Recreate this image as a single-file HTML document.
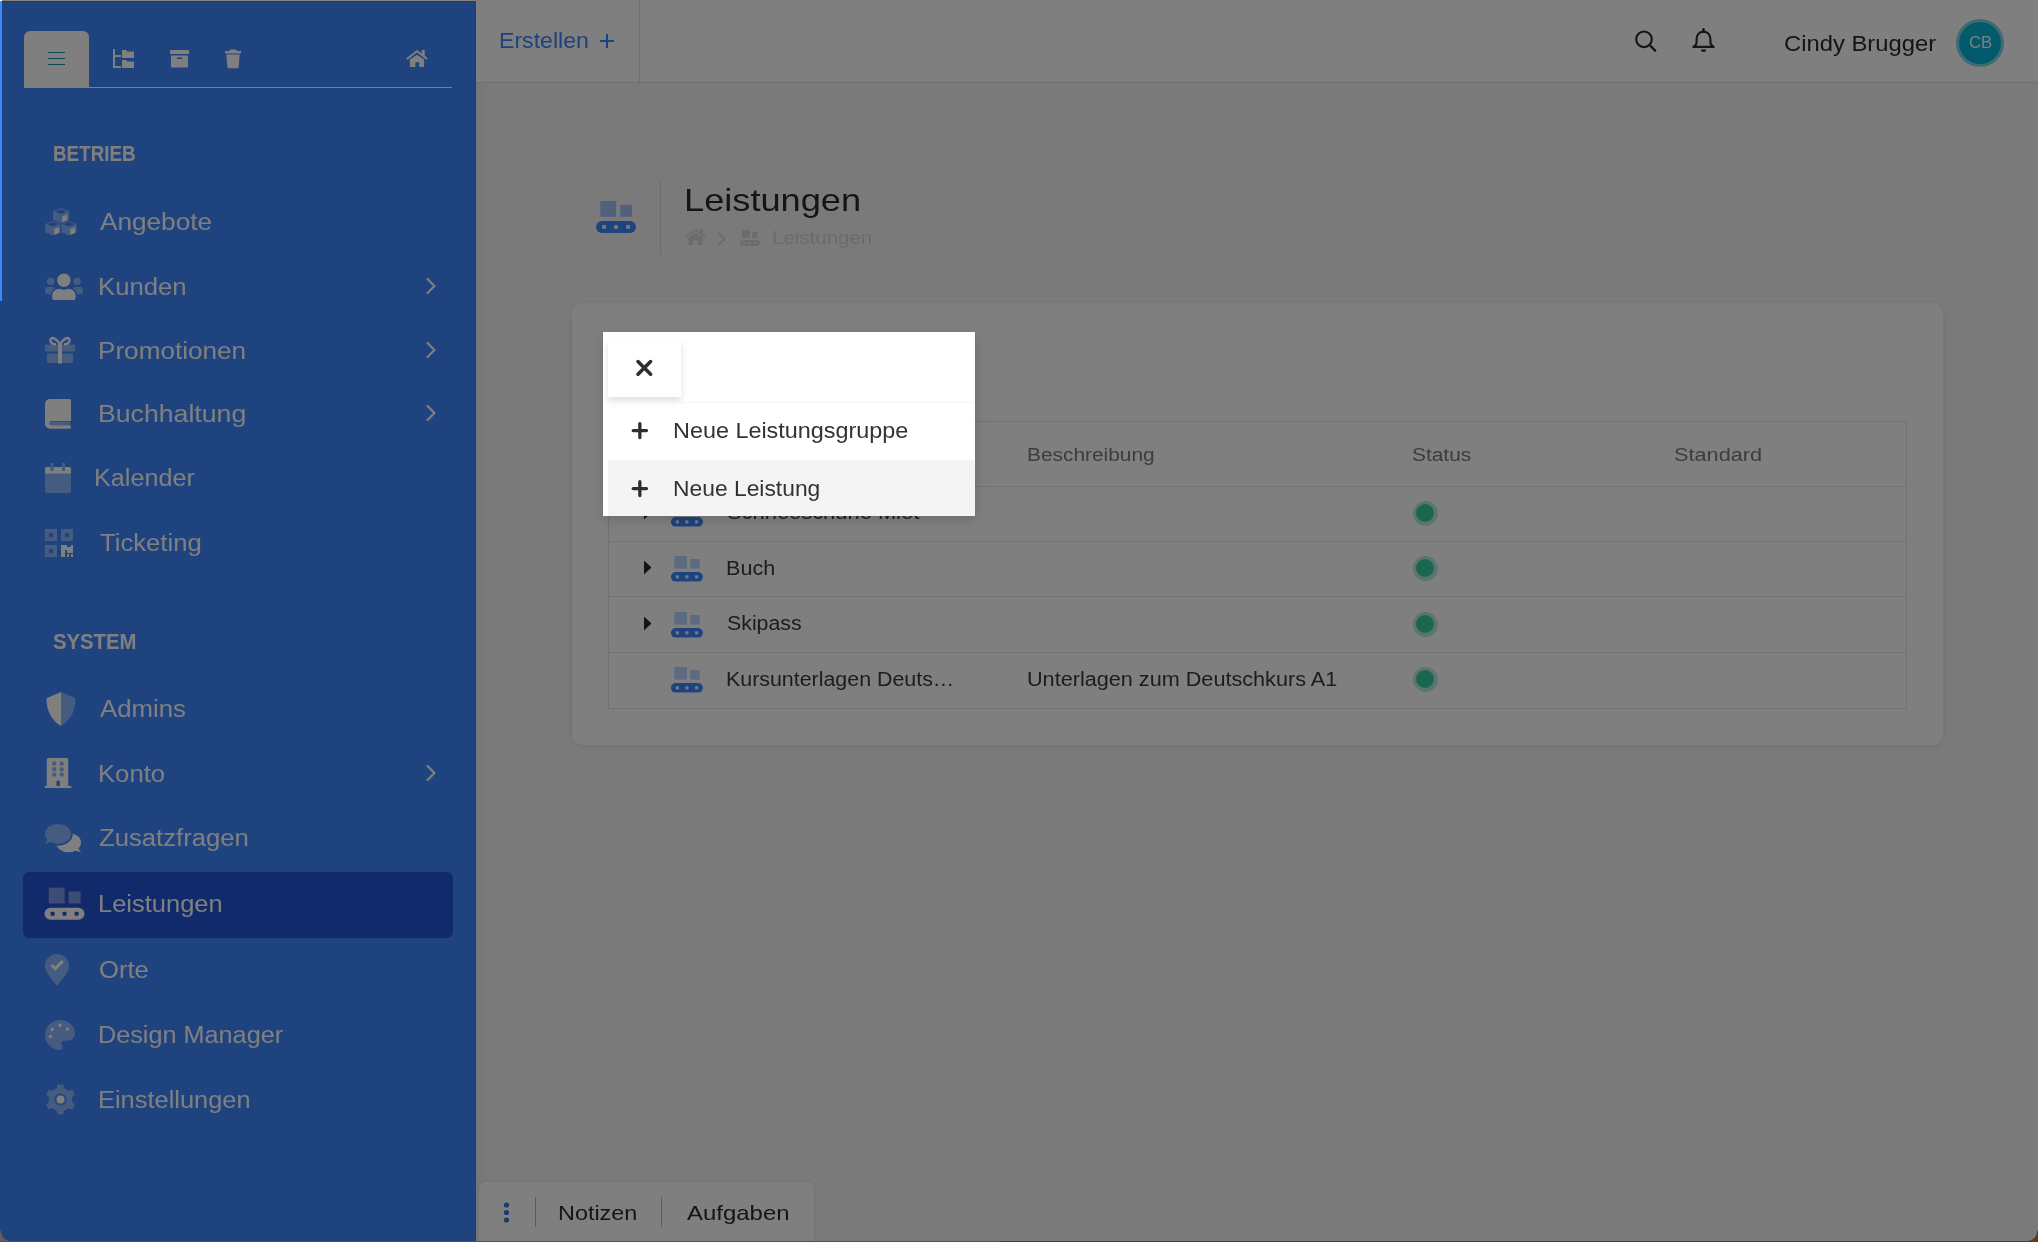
<!DOCTYPE html>
<html><head><meta charset="utf-8"><title>Leistungen</title>
<style>
html,body{margin:0;padding:0}
body{width:2038px;height:1242px;overflow:hidden;position:relative;background:#f5f5f5;font-family:"Liberation Sans",sans-serif}
.t{position:absolute;white-space:nowrap}
.box{position:absolute}
.i{position:absolute;overflow:visible}
#sb{position:absolute;left:0;top:0;width:476px;height:1242px;background:#3e86fe;box-shadow:0 0 18px rgba(0,0,0,.06);z-index:0}
</style></head><body>
<div id="sb"></div>
<div class="box" style="left:24px;top:31px;width:65px;height:56px;background:#fff;border-radius:6px 6px 0 0"></div>
<div class="box" style="left:24px;top:87px;width:428px;height:1px;background:#fff"></div>
<div class="box" style="left:48px;top:51.5px;width:17px;height:1.6px;background:#1a8fa0"></div>
<div class="box" style="left:48px;top:57.5px;width:17px;height:1.6px;background:#1a8fa0"></div>
<div class="box" style="left:48px;top:63.5px;width:17px;height:1.6px;background:#1a8fa0"></div>
<svg class="i" style="left:112px;top:48px" width="24" height="22" viewBox="0 0 24 22"><g fill="#fff"><rect x="1" y="1" width="2" height="19"/><rect x="1" y="7" width="8" height="2"/><rect x="1" y="18" width="8" height="2"/><path d="M10 2h4l1.5 1.5H22v6.5H10z"/><path d="M10 12h4l1.5 1.5H22v6.5H10z"/></g></svg>
<svg class="i" style="left:169px;top:49px" width="22" height="20" viewBox="0 0 22 20"><g fill="#fff"><rect x="1" y="1" width="19" height="4" rx="0.5"/><path d="M2 6.5h17v11a1 1 0 0 1-1 1H3a1 1 0 0 1-1-1z"/></g><rect x="8" y="8.5" width="5" height="1.5" fill="#3e86fe"/></svg>
<svg class="i" style="left:224px;top:48px" width="18" height="21" viewBox="0 0 18 21"><g fill="#fff"><path d="M6 1.5h6l0.8 1.5H17v2.6H1V3h4.2z"/><path d="M2.3 6.5h13.4l-1 12.5a1.5 1.5 0 0 1-1.5 1.3H4.8a1.5 1.5 0 0 1-1.5-1.3z"/></g></svg>
<svg class="i" style="left:405px;top:48px" width="25" height="21" viewBox="0 0 25 21"><g fill="#fff"><path d="M1.2 10.2L12 2l10.8 8.2-1.3 1.5L12 4.5 2.5 11.7z"/><rect x="16.7" y="2" width="3" height="6"/><path d="M4.9 11.5L12 6.7l7.1 4.8V19H14.2v-4.8h-3.8V19H4.9z"/></g></svg>
<div class="t" style="left:53.2px;top:143.4px;font-size:21.6px;line-height:21.6px;transform:scaleX(0.8720);transform-origin:0 0;color:#fff;font-weight:bold;">BETRIEB</div>
<div class="t" style="left:52.7px;top:630.8px;font-size:21.6px;line-height:21.6px;transform:scaleX(0.9402);transform-origin:0 0;color:#fff;font-weight:bold;">SYSTEM</div>
<div class="box" style="left:23px;top:872px;width:430px;height:66px;background:#2254d8;border-radius:6px"></div>
<div class="t" style="left:99.8px;top:210.9px;font-size:23.3px;line-height:23.3px;transform:scaleX(1.1232);transform-origin:0 0;color:#fff;font-weight:normal;">Angebote</div>
<div class="t" style="left:98.2px;top:276.0px;font-size:23.3px;line-height:23.3px;transform:scaleX(1.1039);transform-origin:0 0;color:#fff;font-weight:normal;">Kunden</div>
<div class="t" style="left:98.2px;top:340.0px;font-size:23.3px;line-height:23.3px;transform:scaleX(1.1209);transform-origin:0 0;color:#fff;font-weight:normal;">Promotionen</div>
<div class="t" style="left:98.1px;top:403.0px;font-size:23.3px;line-height:23.3px;transform:scaleX(1.1444);transform-origin:0 0;color:#fff;font-weight:normal;">Buchhaltung</div>
<div class="t" style="left:94.3px;top:466.6px;font-size:23.3px;line-height:23.3px;transform:scaleX(1.0824);transform-origin:0 0;color:#fff;font-weight:normal;">Kalender</div>
<div class="t" style="left:100.4px;top:532.0px;font-size:23.3px;line-height:23.3px;transform:scaleX(1.1011);transform-origin:0 0;color:#fff;font-weight:normal;">Ticketing</div>
<div class="t" style="left:100.0px;top:698.0px;font-size:23.3px;line-height:23.3px;transform:scaleX(1.1052);transform-origin:0 0;color:#fff;font-weight:normal;">Admins</div>
<div class="t" style="left:98.2px;top:763.2px;font-size:23.3px;line-height:23.3px;transform:scaleX(1.1017);transform-origin:0 0;color:#fff;font-weight:normal;">Konto</div>
<div class="t" style="left:98.9px;top:827.2px;font-size:23.3px;line-height:23.3px;transform:scaleX(1.1022);transform-origin:0 0;color:#fff;font-weight:normal;">Zusatzfragen</div>
<div class="t" style="left:98.2px;top:893.2px;font-size:23.3px;line-height:23.3px;transform:scaleX(1.0937);transform-origin:0 0;color:#fff;font-weight:normal;">Leistungen</div>
<div class="t" style="left:98.9px;top:958.6px;font-size:23.3px;line-height:23.3px;transform:scaleX(1.1000);transform-origin:0 0;color:#fff;font-weight:normal;">Orte</div>
<div class="t" style="left:97.8px;top:1024.0px;font-size:23.3px;line-height:23.3px;transform:scaleX(1.0828);transform-origin:0 0;color:#fff;font-weight:normal;">Design Manager</div>
<div class="t" style="left:98.2px;top:1089.0px;font-size:23.3px;line-height:23.3px;transform:scaleX(1.0912);transform-origin:0 0;color:#fff;font-weight:normal;">Einstellungen</div>
<svg class="i" style="left:425px;top:277px" width="12" height="18" viewBox="0 0 12 18"><path d="M2.5 2l7 7-7 7" fill="none" stroke="#fff" stroke-width="2.2" stroke-linecap="round" stroke-linejoin="round"/></svg>
<svg class="i" style="left:425px;top:341px" width="12" height="18" viewBox="0 0 12 18"><path d="M2.5 2l7 7-7 7" fill="none" stroke="#fff" stroke-width="2.2" stroke-linecap="round" stroke-linejoin="round"/></svg>
<svg class="i" style="left:425px;top:404px" width="12" height="18" viewBox="0 0 12 18"><path d="M2.5 2l7 7-7 7" fill="none" stroke="#fff" stroke-width="2.2" stroke-linecap="round" stroke-linejoin="round"/></svg>
<svg class="i" style="left:425px;top:764px" width="12" height="18" viewBox="0 0 12 18"><path d="M2.5 2l7 7-7 7" fill="none" stroke="#fff" stroke-width="2.2" stroke-linecap="round" stroke-linejoin="round"/></svg>
<svg class="i" style="left:44px;top:207px" width="34" height="31" viewBox="44 207 34 31"><g opacity=".4"><path fill="#fff" d="M61 208L69 211.2V220.2L61 223.4L53 220.2V211.2Z"/><path fill="#fff" stroke="#3e86fe" stroke-width="0.9" d="M53 220.5L61 223.7V232.7L53 235.9L45 232.7V223.7Z"/><path fill="#fff" stroke="#3e86fe" stroke-width="0.9" d="M69 220.5L77 223.7V232.7L69 235.9L61 232.7V223.7Z"/><path fill="#3e86fe" d="M61 209.4L67.2 211.7L61 214L54.8 211.7Z"/><path fill="#3e86fe" d="M53 221.9L59.2 224.2L53 226.5L46.8 224.2Z"/><path fill="#3e86fe" d="M69 221.9L75.2 224.2L69 226.5L62.8 224.2Z"/></g><g fill="#fff"><path d="M62.2 216.4L67.2 214.6V220.4L62.2 222.2Z"/><path d="M54.2 228.9L59.2 227.1V232.9L54.2 234.7Z"/><path d="M70.2 228.9L75.2 227.1V232.9L70.2 234.7Z"/></g></svg>
<svg class="i" style="left:44px;top:273px" width="40" height="29" viewBox="0 0 40 29"><defs><mask id="usm"><rect width="40" height="29" fill="#fff"/><path d="M8.2 22.3a6.2 6.2 0 0 1 6.2-6.2h1.8c1.3 0 2.4 .9 3.7 .9s2.4-.9 3.7-.9h1.8a6.2 6.2 0 0 1 6.2 6.2v2.6a2.2 2.2 0 0 1-2.2 2.2H10.4a2.2 2.2 0 0 1-2.2-2.2z" fill="#000" stroke="#000" stroke-width="3.2"/></mask></defs><g fill="#fff" opacity=".4"><circle cx="6.6" cy="8.5" r="3.75"/><circle cx="33.2" cy="8.5" r="3.75"/><g mask="url(#usm)"><rect x="1" y="14" width="10.5" height="7.3" rx="3"/><rect x="28.4" y="14" width="10.5" height="7.3" rx="3"/></g></g><g fill="#fff"><circle cx="19.9" cy="7.3" r="6.7"/><path d="M8.2 22.3a6.2 6.2 0 0 1 6.2-6.2h1.8c1.3 0 2.4 .9 3.7 .9s2.4-.9 3.7-.9h1.8a6.2 6.2 0 0 1 6.2 6.2v2.6a2.2 2.2 0 0 1-2.2 2.2H10.4a2.2 2.2 0 0 1-2.2-2.2z"/></g></svg>
<svg class="i" style="left:44px;top:336px" width="32" height="28" viewBox="0 0 32 28"><g fill="#fff" fill-opacity="0.4"><rect x="1" y="8.5" width="30" height="7" rx="1"/><path d="M3 17.5h26v8a1.5 1.5 0 0 1-1.5 1.5h-23A1.5 1.5 0 0 1 3 25.5z"/></g><g fill="#fff"><rect x="14" y="8" width="4" height="19.5"/><path d="M16 8.5C13 3 8 0 6.5 3.5 5.5 6 8 8 12 8.5M16 8.5C19 3 24 0 25.5 3.5 26.5 6 24 8 20 8.5" fill="none" stroke="#fff" stroke-width="2.4"/></g></svg>
<svg class="i" style="left:44px;top:398px" width="28" height="32" viewBox="0 0 28 32"><path fill="#fff" d="M6 1H25.5A1.5 1.5 0 0 1 27 2.5V23.1H7.3A2.05 2.05 0 0 0 7.3 27.2H25.3A1.8 1.8 0 0 1 25.3 30.8H6A5 5 0 0 1 1 25.8V6A5 5 0 0 1 6 1Z"/><path fill="#fff" fill-opacity="0.4" d="M7.3 23.4H26.2V26.9H7.3A1.75 1.75 0 0 1 7.3 23.4Z"/></svg>
<svg class="i" style="left:44px;top:462px" width="28" height="32" viewBox="0 0 28 32"><g fill="#fff" fill-opacity="0.4"><path d="M1 11h26v18a2 2 0 0 1-2 2H3a2 2 0 0 1-2-2z"/><rect x="6.5" y="1" width="3" height="8"/><rect x="18" y="1" width="3" height="8"/></g><g fill="#fff"><path d="M3 5h3.5v4h3V5H18v4h3V5h4a2 2 0 0 1 2 2v4.5H1V7a2 2 0 0 1 2-2z"/></g></svg>
<svg class="i" style="left:44px;top:528px" width="30" height="30" viewBox="0 0 30 30"><g fill="#fff" fill-opacity="0.4"><path fill-rule="evenodd" d="M1 1h12v12H1zM5 5v4h4V5z"/><path fill-rule="evenodd" d="M17 1h12v12H17zM21 5v4h4V5z"/><path fill-rule="evenodd" d="M1 17h12v12H1zM5 21v4h4V21z"/></g><g fill="#fff"><path d="M17 17h6v2h4v-2h2v8h-6v-3h-2v7h-4z"/><rect x="23" y="26" width="2" height="3"/><rect x="27" y="26" width="2" height="3"/></g></svg>
<svg class="i" style="left:45px;top:691px" width="32" height="36" viewBox="0 0 32 36"><path fill="#fff" d="M16 1L3 6.5C2.2 6.9 1.5 7.7 1.5 8.7 1.6 17 5 29 16 35z"/><path fill="#fff" fill-opacity="0.4" d="M16 1l13 5.5c.8.4 1.5 1.2 1.5 2.2-.1 8.3-3.5 20.3-14.5 26.3z"/></svg>
<svg class="i" style="left:44px;top:757px" width="28" height="32" viewBox="0 0 28 32"><g fill="#fff"><path d="M4.2 1h18.5a1.5 1.5 0 0 1 1.5 1.5V29h3.1v2H0.8v-2h1.9V2.5A1.5 1.5 0 0 1 4.2 1z"/></g><g fill="#3e86fe" fill-opacity=".6"><rect x="8.2" y="4.5" width="4" height="4" rx="1.2"/><rect x="15.7" y="4.5" width="4" height="4" rx="1.2"/><rect x="8.2" y="10.3" width="4" height="4" rx="1.2"/><rect x="15.7" y="10.3" width="4" height="4" rx="1.2"/><rect x="8.2" y="15.6" width="4" height="4" rx="1.2"/><rect x="15.7" y="15.6" width="4" height="4" rx="1.2"/></g><rect x="12.4" y="23.8" width="3.5" height="5.2" fill="#3e86fe"/></svg>
<svg class="i" style="left:44px;top:823px" width="40" height="32" viewBox="0 0 40 32"><defs><mask id="chm"><rect width="40" height="32" fill="#fff"/><ellipse cx="14" cy="10.9" rx="14.8" ry="11.8" fill="#000"/></mask></defs><g fill="#fff" opacity=".4"><ellipse cx="14" cy="10.9" rx="13" ry="10"/><path d="M4 15.5L1 20.7l8-2.2z"/></g><g fill="#fff" mask="url(#chm)"><ellipse cx="24.5" cy="19.6" rx="12.5" ry="9.6"/><path d="M33.5 24.5L37 29l-8.5-1.8z"/></g></svg>
<svg class="i" style="left:44px;top:887px" width="42" height="35" viewBox="0 0 42 35"><g transform="translate(0.5 0.6) scale(1.0)"><rect x="4.25" y="0" width="15.9" height="15.9" fill="#fff" fill-opacity="0.4"/><rect x="24.1" y="3.9" width="12" height="12" fill="#fff" fill-opacity="0.4"/><rect x="0" y="20.1" width="40" height="12" rx="6" fill="#fff"/><g fill="#2254d8" fill-opacity="1"><rect x="6.1" y="24.1" width="4" height="4" rx="1"/><rect x="18" y="24.1" width="4" height="4" rx="1"/><rect x="30.1" y="24.1" width="4" height="4" rx="1"/></g></g></svg>
<svg class="i" style="left:44px;top:953px" width="26" height="34" viewBox="0 0 26 34"><path fill="#fff" fill-opacity="0.4" d="M13 1C6.4 1 1 6.3 1 12.6c0 7.1 7 13.8 12 20.4 5-6.6 12-13.3 12-20.4C25 6.3 19.6 1 13 1z"/><path d="M7.5 12l3.8 3.6L18.8 8" fill="none" stroke="#fff" stroke-width="3"/></svg>
<svg class="i" style="left:44px;top:1019px" width="32" height="32" viewBox="0 0 32 32"><path fill="#fff" fill-opacity="0.4" d="M16 1C7.7 1 1 7.7 1 16s6.7 15 15 15c1.6 0 2.7-1.2 2.7-2.7 0-.8-.3-1.4-.7-2-.4-.5-.6-1.1-.6-1.8 0-1.5 1.2-2.7 2.7-2.7h3.2C27.4 21.8 31 18.7 31 14 31 6.7 24.3 1 16 1z"/><g fill="#fff"><circle cx="8.3" cy="10.3" r="1.7"/><circle cx="16.1" cy="6.2" r="1.7"/><circle cx="23.4" cy="10.1" r="1.7"/><circle cx="6.5" cy="17.5" r="1.7"/></g></svg>
<svg class="i" style="left:45px;top:1084px" width="32" height="32" viewBox="0 0 32 32"><path fill="#fff" fill-opacity="0.4" d="M11.80 4.30L12.70 0.46L18.30 0.46L19.20 4.30A11.8 11.8 0 0 1 23.35 6.69L23.35 6.69L27.13 5.55L29.93 10.40L27.05 13.10A11.8 11.8 0 0 1 27.05 17.90L27.05 17.90L29.93 20.60L27.13 25.45L23.35 24.31A11.8 11.8 0 0 1 19.20 26.70L19.20 26.70L18.30 30.54L12.70 30.54L11.80 26.70A11.8 11.8 0 0 1 7.65 24.31L7.65 24.31L3.87 25.45L1.07 20.60L3.95 17.90A11.8 11.8 0 0 1 3.95 13.10L3.95 13.10L1.07 10.40L3.87 5.55L7.65 6.69A11.8 11.8 0 0 1 11.80 4.30Z"/><circle cx="15.5" cy="15.5" r="6.2" fill="#3e86fe" fill-opacity=".75"/><circle fill="#fff" cx="15.5" cy="15.5" r="4"/></svg>
<div class="box" style="left:476px;top:0;width:1562px;height:82px;background:#fff;border-bottom:1px solid #dedede"></div>
<div class="box" style="left:639px;top:0;width:1px;height:82px;background:#dcdcdc"></div>
<div class="t" style="left:498.8px;top:30.5px;font-size:21.4px;line-height:21.4px;transform:scaleX(1.0800);transform-origin:0 0;color:#3a86fc;font-weight:normal;">Erstellen</div>
<div class="box" style="left:600px;top:40.2px;width:14.3px;height:1.7px;background:#3a86fc"></div>
<div class="box" style="left:606.3px;top:33.5px;width:1.7px;height:14.5px;background:#3a86fc"></div>
<svg class="i" style="left:1632px;top:28px" width="28" height="28" viewBox="0 0 28 28"><circle cx="12" cy="11.3" r="7.8" fill="none" stroke="#2a2a2a" stroke-width="2.1"/><path d="M17.6 17l5.6 5.6" stroke="#2a2a2a" stroke-width="2.3" stroke-linecap="round"/></svg>
<svg class="i" style="left:1691px;top:26px" width="26" height="28" viewBox="0 0 26 28"><path d="M12.5 3.2v2.2" stroke="#2a2a2a" stroke-width="2.4" stroke-linecap="round"/><path d="M12.5 5.6c-4.5 0-6.9 3.4-6.9 7.8v3.1c0 2-1.5 3.3-3.3 4.4h20.4c-1.8-1.1-3.3-2.4-3.3-4.4v-3.1c0-4.4-2.4-7.8-6.9-7.8z" fill="none" stroke="#2a2a2a" stroke-width="2.1" stroke-linejoin="round"/><path d="M10 23.6h5a2.5 2.5 0 0 1-5 0z" fill="#2a2a2a"/></svg>
<div class="t" style="left:1783.9px;top:33.0px;font-size:21.8px;line-height:21.8px;transform:scaleX(1.0920);transform-origin:0 0;color:#2b2b2b;font-weight:normal;">Cindy Brugger</div>
<div class="box" style="left:1956px;top:19px;width:48px;height:48px;border-radius:50%;background:#7cd8ea"></div>
<div class="box" style="left:1959px;top:22px;width:42px;height:42px;border-radius:50%;background:#04b4d8"></div>
<div class="t" style="left:1968.7px;top:34.6px;font-size:15.8px;line-height:15.8px;transform:scaleX(1.0600);transform-origin:0 0;color:#fff;font-weight:normal;">CB</div>
<svg class="i" style="left:595px;top:200px" width="42" height="35" viewBox="0 0 42 35"><g transform="translate(1 1) scale(1.0)"><rect x="4.25" y="0" width="15.9" height="15.9" fill="#3e86fe" fill-opacity=".45"/><rect x="24.1" y="3.9" width="12" height="12" fill="#3e86fe" fill-opacity=".45"/><rect x="0" y="20.1" width="40" height="12" rx="6" fill="#3e86fe"/><g fill="#fff" fill-opacity=".85"><rect x="6.1" y="24.1" width="4" height="4" rx="1"/><rect x="18" y="24.1" width="4" height="4" rx="1"/><rect x="30.1" y="24.1" width="4" height="4" rx="1"/></g></g></svg>
<div class="box" style="left:660px;top:181px;width:1px;height:74px;background:#dcdcdc"></div>
<div class="t" style="left:683.7px;top:184.7px;font-size:31.8px;line-height:31.8px;transform:scaleX(1.1384);transform-origin:0 0;color:#2a2a2a;font-weight:normal;">Leistungen</div>
<svg class="i" style="left:684px;top:227px" width="24" height="19" viewBox="0 0 24 19"><g fill="#d8d8d8"><path d="M1.2 9.2L11.5 1.5l10.3 7.7-1.2 1.4-9.1-6.8-9.1 6.8z"/><rect x="16" y="1.5" width="2.8" height="5"/><path d="M4.5 10.5l7-5 7 5v7.5h-4.5v-4.5h-5v4.5h-4.5z"/></g></svg>
<svg class="i" style="left:716px;top:231px" width="14" height="15" viewBox="0 0 14 15"><path d="M3.2 2.4l5.3 5.3-5.3 5.3" fill="none" stroke="#d6d6d6" stroke-width="2.1" stroke-linecap="round"/></svg>
<svg class="i" style="left:739px;top:229px" width="22" height="17" viewBox="0 0 22 17"><g transform="translate(1 1) scale(0.495)"><rect x="4.25" y="0" width="15.9" height="15.9" fill="#d8d8d8" fill-opacity="1"/><rect x="24.1" y="3.9" width="12" height="12" fill="#d8d8d8" fill-opacity="1"/><rect x="0" y="20.1" width="40" height="12" rx="6" fill="#d8d8d8"/><g fill="#f5f5f5" fill-opacity="1"><rect x="6.1" y="24.1" width="4" height="4" rx="1"/><rect x="18" y="24.1" width="4" height="4" rx="1"/><rect x="30.1" y="24.1" width="4" height="4" rx="1"/></g></g></svg>
<div class="t" style="left:771.8px;top:228.5px;font-size:18.3px;line-height:18.3px;transform:scaleX(1.1207);transform-origin:0 0;color:#d6d6d6;font-weight:normal;">Leistungen</div>
<div class="box" style="left:572px;top:303px;width:1371px;height:442px;background:#fff;border-radius:11px;box-shadow:0 2px 6px rgba(0,0,0,.08)"></div>
<div class="box" style="left:608px;top:421px;width:1299px;height:288px;border:1px solid #e4e4e4;box-sizing:border-box"></div>
<div class="box" style="left:608px;top:486px;width:1298px;height:1px;background:#e4e4e4"></div>
<div class="box" style="left:608px;top:541px;width:1298px;height:1px;background:#e4e4e4"></div>
<div class="box" style="left:608px;top:596px;width:1298px;height:1px;background:#e4e4e4"></div>
<div class="box" style="left:608px;top:652px;width:1298px;height:1px;background:#e4e4e4"></div>
<div class="t" style="left:1026.6px;top:445.7px;font-size:18px;line-height:18px;transform:scaleX(1.1602);transform-origin:0 0;color:#7a7a7a;font-weight:normal;">Beschreibung</div>
<div class="t" style="left:1411.6px;top:445.7px;font-size:18px;line-height:18px;transform:scaleX(1.1600);transform-origin:0 0;color:#7a7a7a;font-weight:normal;">Status</div>
<div class="t" style="left:1673.5px;top:445.7px;font-size:18px;line-height:18px;transform:scaleX(1.2056);transform-origin:0 0;color:#7a7a7a;font-weight:normal;">Standard</div>
<div class="t" style="left:727.4px;top:502.4px;font-size:20px;line-height:20px;transform:scaleX(1.0943);transform-origin:0 0;color:#3a3a3a;font-weight:normal;">Schneeschuhe Miet</div>
<svg class="i" style="left:643px;top:505px" width="10" height="16" viewBox="0 0 10 16"><path d="M1 0.6l7.5 7-7.5 7z" fill="#2a2a2a"/></svg>
<svg class="i" style="left:670px;top:500px" width="34" height="28" viewBox="0 0 34 28"><g transform="translate(0.9 0.9) scale(0.8)"><rect x="4.25" y="0" width="15.9" height="15.9" fill="#3e86fe" fill-opacity=".35"/><rect x="24.1" y="3.9" width="12" height="12" fill="#3e86fe" fill-opacity=".35"/><rect x="0" y="20.1" width="40" height="12" rx="6" fill="#3e86fe"/><g fill="#fff" fill-opacity=".9"><rect x="6.1" y="24.1" width="4" height="4" rx="1"/><rect x="18" y="24.1" width="4" height="4" rx="1"/><rect x="30.1" y="24.1" width="4" height="4" rx="1"/></g></g></svg>
<div class="box" style="left:1412.5px;top:500.5px;width:25px;height:25px;border-radius:50%;background:#b8ecda"></div>
<div class="box" style="left:1416px;top:504px;width:18px;height:18px;border-radius:50%;background:#36cca0"></div>
<div class="t" style="left:726.3px;top:557.9px;font-size:20px;line-height:20px;transform:scaleX(1.0791);transform-origin:0 0;color:#3a3a3a;font-weight:normal;">Buch</div>
<svg class="i" style="left:643px;top:560px" width="10" height="16" viewBox="0 0 10 16"><path d="M1 0.6l7.5 7-7.5 7z" fill="#2a2a2a"/></svg>
<svg class="i" style="left:670px;top:555px" width="34" height="28" viewBox="0 0 34 28"><g transform="translate(0.9 0.9) scale(0.8)"><rect x="4.25" y="0" width="15.9" height="15.9" fill="#3e86fe" fill-opacity=".35"/><rect x="24.1" y="3.9" width="12" height="12" fill="#3e86fe" fill-opacity=".35"/><rect x="0" y="20.1" width="40" height="12" rx="6" fill="#3e86fe"/><g fill="#fff" fill-opacity=".9"><rect x="6.1" y="24.1" width="4" height="4" rx="1"/><rect x="18" y="24.1" width="4" height="4" rx="1"/><rect x="30.1" y="24.1" width="4" height="4" rx="1"/></g></g></svg>
<div class="box" style="left:1412.5px;top:555.5px;width:25px;height:25px;border-radius:50%;background:#b8ecda"></div>
<div class="box" style="left:1416px;top:559px;width:18px;height:18px;border-radius:50%;background:#36cca0"></div>
<div class="t" style="left:727.4px;top:613.4px;font-size:20px;line-height:20px;transform:scaleX(1.0662);transform-origin:0 0;color:#3a3a3a;font-weight:normal;">Skipass</div>
<svg class="i" style="left:643px;top:616px" width="10" height="16" viewBox="0 0 10 16"><path d="M1 0.6l7.5 7-7.5 7z" fill="#2a2a2a"/></svg>
<svg class="i" style="left:670px;top:611px" width="34" height="28" viewBox="0 0 34 28"><g transform="translate(0.9 0.9) scale(0.8)"><rect x="4.25" y="0" width="15.9" height="15.9" fill="#3e86fe" fill-opacity=".35"/><rect x="24.1" y="3.9" width="12" height="12" fill="#3e86fe" fill-opacity=".35"/><rect x="0" y="20.1" width="40" height="12" rx="6" fill="#3e86fe"/><g fill="#fff" fill-opacity=".9"><rect x="6.1" y="24.1" width="4" height="4" rx="1"/><rect x="18" y="24.1" width="4" height="4" rx="1"/><rect x="30.1" y="24.1" width="4" height="4" rx="1"/></g></g></svg>
<div class="box" style="left:1412.5px;top:611.5px;width:25px;height:25px;border-radius:50%;background:#b8ecda"></div>
<div class="box" style="left:1416px;top:615px;width:18px;height:18px;border-radius:50%;background:#36cca0"></div>
<div class="t" style="left:726.4px;top:668.9px;font-size:20px;line-height:20px;transform:scaleX(1.0694);transform-origin:0 0;color:#3a3a3a;font-weight:normal;">Kursunterlagen Deuts…</div>
<svg class="i" style="left:670px;top:666px" width="34" height="28" viewBox="0 0 34 28"><g transform="translate(0.9 0.9) scale(0.8)"><rect x="4.25" y="0" width="15.9" height="15.9" fill="#3e86fe" fill-opacity=".35"/><rect x="24.1" y="3.9" width="12" height="12" fill="#3e86fe" fill-opacity=".35"/><rect x="0" y="20.1" width="40" height="12" rx="6" fill="#3e86fe"/><g fill="#fff" fill-opacity=".9"><rect x="6.1" y="24.1" width="4" height="4" rx="1"/><rect x="18" y="24.1" width="4" height="4" rx="1"/><rect x="30.1" y="24.1" width="4" height="4" rx="1"/></g></g></svg>
<div class="box" style="left:1412.5px;top:666.5px;width:25px;height:25px;border-radius:50%;background:#b8ecda"></div>
<div class="box" style="left:1416px;top:670px;width:18px;height:18px;border-radius:50%;background:#36cca0"></div>
<div class="t" style="left:1026.7px;top:669.0px;font-size:20px;line-height:20px;transform:scaleX(1.0818);transform-origin:0 0;color:#3a3a3a;font-weight:normal;">Unterlagen zum Deutschkurs A1</div>
<div class="box" style="left:479px;top:1182px;width:335px;height:70px;background:#fff;border-radius:7px;box-shadow:0 0 6px rgba(0,0,0,.08)"></div>
<svg class="i" style="left:500px;top:1200px" width="12" height="26" viewBox="0 0 12 26"><g fill="#3a6ee0"><circle cx="6.5" cy="5" r="2.6"/><circle cx="6.5" cy="12.5" r="2.6"/><circle cx="6.5" cy="20" r="2.6"/></g></svg>
<div class="box" style="left:535px;top:1197px;width:1px;height:30px;background:#b8b8b8"></div>
<div class="box" style="left:661px;top:1197px;width:1px;height:30px;background:#b8b8b8"></div>
<div class="t" style="left:558.3px;top:1201.8px;font-size:21px;line-height:21px;transform:scaleX(1.1132);transform-origin:0 0;color:#2b2b2b;font-weight:normal;">Notizen</div>
<div class="t" style="left:687.3px;top:1201.8px;font-size:21px;line-height:21px;transform:scaleX(1.1404);transform-origin:0 0;color:#2b2b2b;font-weight:normal;">Aufgaben</div>
<div class="box" style="left:0;top:0;width:2038px;height:1242px;background:rgba(0,0,0,.5)"></div>
<div class="box" style="left:2px;top:0;width:474px;height:1px;background:#8a857c"></div>
<div class="box" style="left:2px;top:1px;width:474px;height:1px;background:#173c7c"></div>
<div class="box" style="left:475px;top:1px;width:1px;height:1241px;background:#1b3f7e"></div>
<div class="box" style="left:0;top:0;width:2px;height:1px;background:#fff"></div>
<div class="box" style="left:0;top:1px;width:2px;height:300px;background:#3f88f8"></div>
<div class="box" style="left:0;top:1231px;width:11px;height:11px;background:radial-gradient(circle at 11px 0, rgba(0,0,0,0) 9.5px, #606060 10.5px)"></div>
<div class="box" style="left:0;top:1241px;width:1000px;height:1px;background:#505050"></div>
<div class="box" style="left:1000px;top:1241px;width:1038px;height:1px;background:#4a3c2c"></div>
<div class="box" style="left:2027px;top:1231px;width:11px;height:11px;background:radial-gradient(circle at 0 0, rgba(0,0,0,0) 9.5px, #5a3e18 10.5px)"></div>
<div class="box" style="left:603px;top:332px;width:372px;height:184px;background:#fff;box-shadow:0 4px 12px rgba(0,0,0,.15)"></div>
<div class="box" style="left:608px;top:340px;width:73px;height:57px;background:#fff;box-shadow:0 4px 7px rgba(0,0,0,.13)"></div>
<svg class="i" style="left:635px;top:359px" width="19" height="18" viewBox="0 0 19 18"><path d="M3 2.6l12.6 12.6M15.6 2.6L3 15.2" stroke="#2c2f33" stroke-width="3.6" stroke-linecap="round"/></svg>
<div class="box" style="left:608px;top:402px;width:367px;height:1px;background:#f6f6f6"></div>
<div class="box" style="left:608px;top:460px;width:367px;height:56px;background:#f4f4f4"></div>
<svg class="i" style="left:630px;top:420px" width="20" height="20" viewBox="0 0 20 20"><path d="M3.2 10.6H16.5M9.85 3.7V17.5" stroke="#2c2f33" stroke-width="3.3" stroke-linecap="round"/></svg>
<svg class="i" style="left:630px;top:478px" width="20" height="20" viewBox="0 0 20 20"><path d="M3.2 10.6H16.5M9.85 3.7V17.5" stroke="#2c2f33" stroke-width="3.3" stroke-linecap="round"/></svg>
<div class="t" style="left:672.9px;top:420.1px;font-size:22px;line-height:22px;transform:scaleX(1.0630);transform-origin:0 0;color:#333;font-weight:normal;">Neue Leistungsgruppe</div>
<div class="t" style="left:672.9px;top:478.1px;font-size:22px;line-height:22px;transform:scaleX(1.0381);transform-origin:0 0;color:#333;font-weight:normal;">Neue Leistung</div>
</body></html>
